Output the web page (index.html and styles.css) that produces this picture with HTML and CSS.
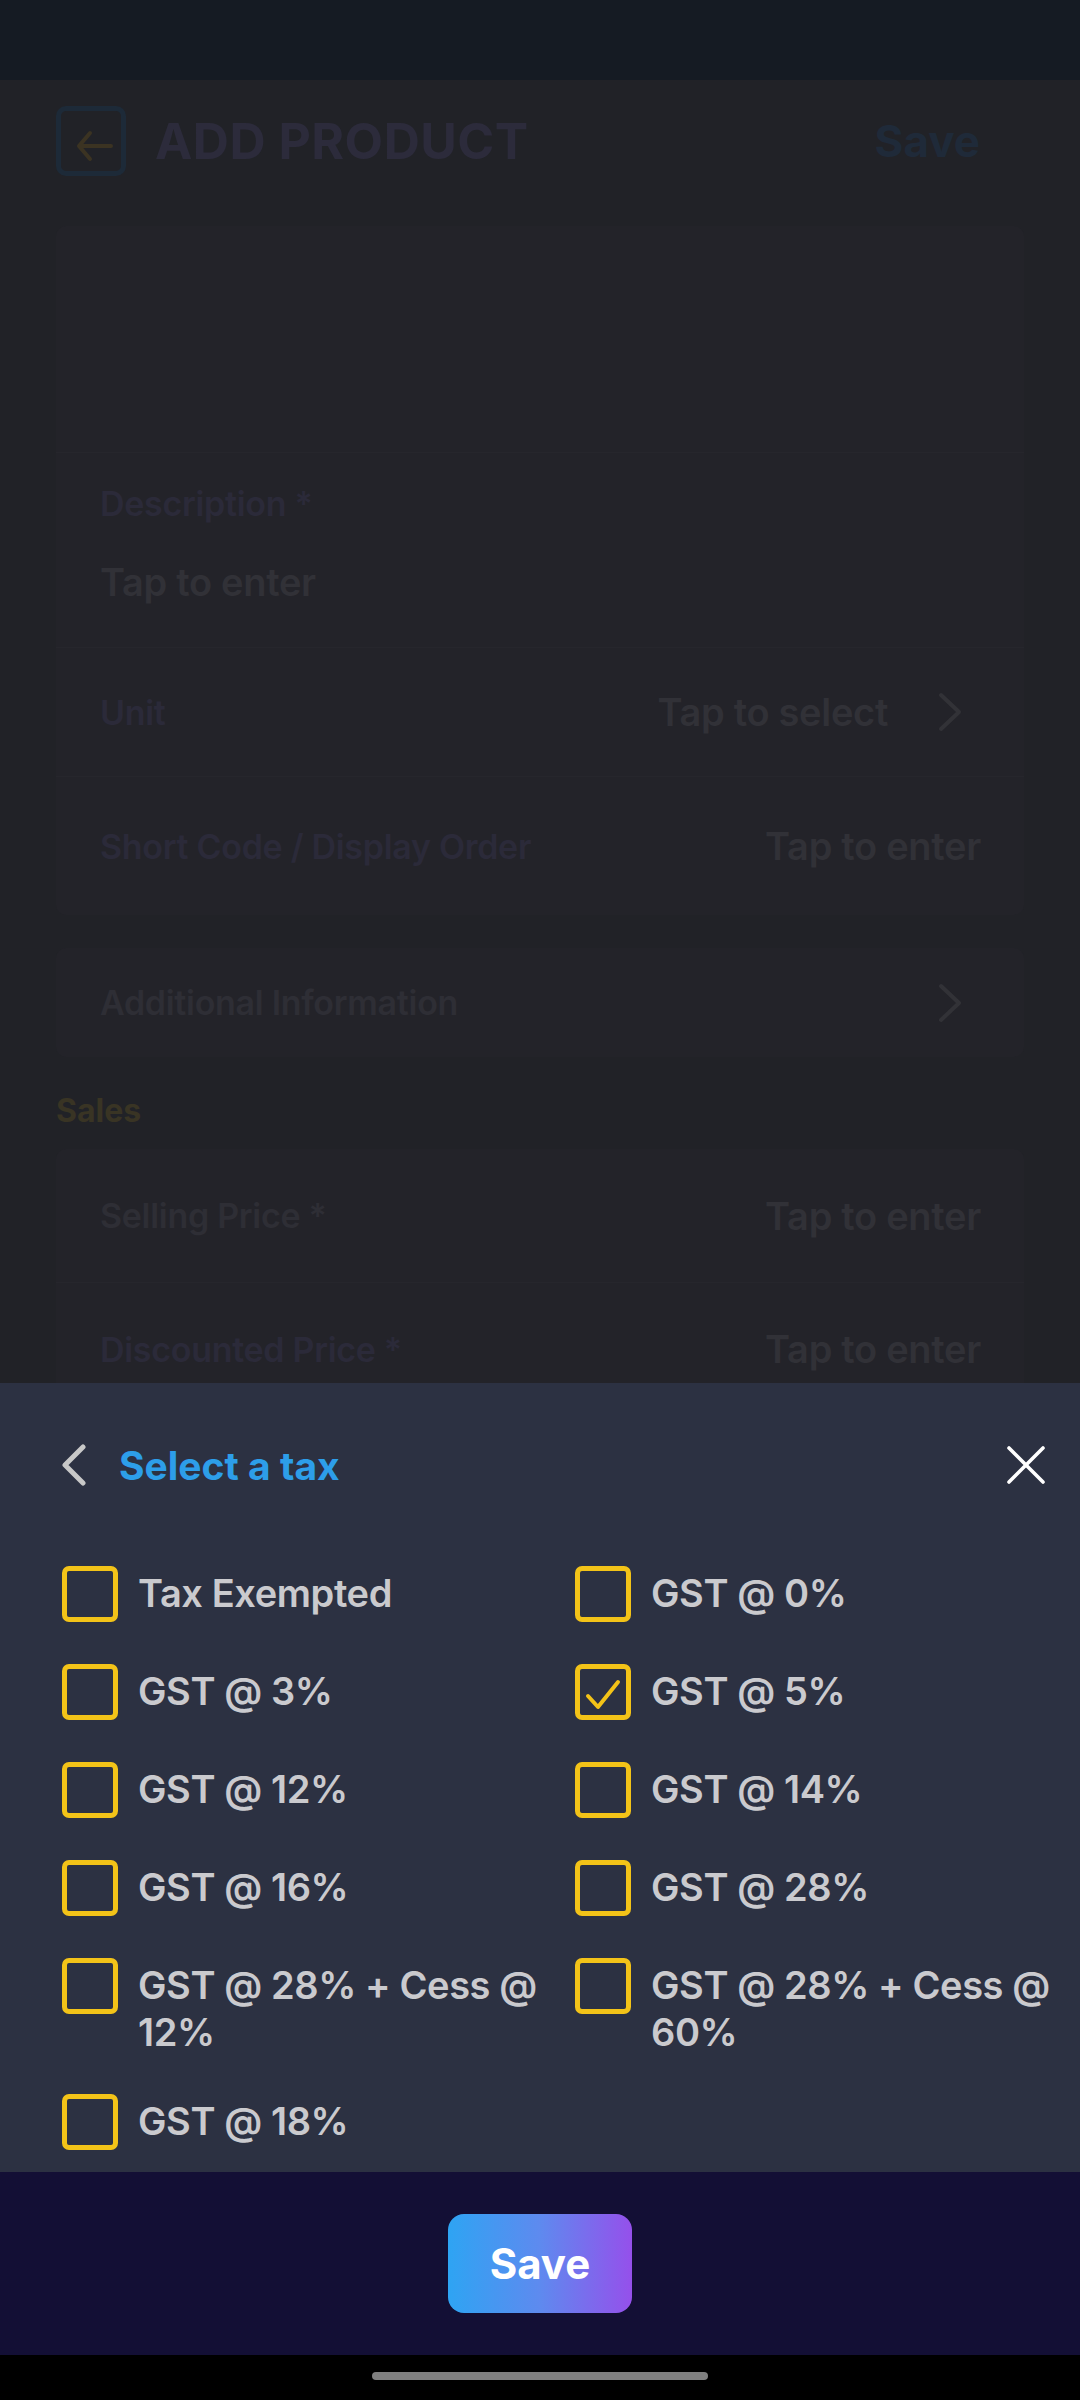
FILE: index.html
```html
<!DOCTYPE html>
<html lang="en">
<head>
<meta charset="utf-8">
<title>Add Product - Select a tax</title>
<link rel="stylesheet" href="styles.css">
</head>
<body>
<div class="screen">
  <div class="status-bar"></div>

  <div class="page">
    <div class="topbar">
      <div class="back-btn">
        <svg width="60" height="60" viewBox="0 0 60 60"><path d="M50 35 H18 M29 22 L18 35 L29 48" fill="none" stroke="#3b3322" stroke-width="4" stroke-linecap="round" stroke-linejoin="round"/></svg>
      </div>
      <div class="title">ADD PRODUCT</div>
      <div class="top-save">Save</div>
    </div>

    <div class="card">
      <div class="image-area"></div>
      <div class="row row-desc">
        <div class="label">Description *</div>
        <div class="value">Tap to enter</div>
      </div>
      <div class="row row-line row-unit">
        <div class="label">Unit</div>
        <div class="right">
          <span class="value">Tap to select</span>
          <svg class="chev" width="24" height="40" viewBox="0 0 24 40"><path d="M3 3 L21 20 L3 37" fill="none" stroke="#323237" stroke-width="4" stroke-linecap="round" stroke-linejoin="round"/></svg>
        </div>
      </div>
      <div class="row row-line row-code">
        <div class="label">Short Code / Display Order</div>
        <div class="value">Tap to enter</div>
      </div>
    </div>

    <div class="card card-add">
      <div class="row row-add">
        <div class="label label-muted">Additional Information</div>
        <svg class="chev" width="24" height="40" viewBox="0 0 24 40"><path d="M3 3 L21 20 L3 37" fill="none" stroke="#323237" stroke-width="4" stroke-linecap="round" stroke-linejoin="round"/></svg>
      </div>
    </div>

    <div class="section-title">Sales</div>

    <div class="card">
      <div class="row row-price">
        <div class="label label-muted">Selling Price *</div>
        <div class="value">Tap to enter</div>
      </div>
      <div class="row row-line row-price">
        <div class="label">Discounted Price *</div>
        <div class="value">Tap to enter</div>
      </div>
    </div>
  </div>

  <div class="sheet">
    <div class="sheet-head">
      <div class="sheet-left">
        <svg width="24" height="42" viewBox="0 0 24 42"><path d="M21 3 L3 21 L21 39" fill="none" stroke="#c8c8c8" stroke-width="5" stroke-linecap="round" stroke-linejoin="round"/></svg>
        <span class="sheet-title">Select a tax</span>
      </div>
      <svg class="close" width="38" height="38" viewBox="0 0 38 38"><path d="M2 2 L36 36 M36 2 L2 36" fill="none" stroke="#ffffff" stroke-width="3.6" stroke-linecap="round"/></svg>
    </div>

    <div class="tax-grid">
      <div class="tax"><span class="box"></span><span class="tax-name">Tax Exempted</span></div>
      <div class="tax"><span class="box"></span><span class="tax-name">GST @ 0%</span></div>
      <div class="tax"><span class="box"></span><span class="tax-name">GST @ 3%</span></div>
      <div class="tax"><span class="box checked"><svg width="46" height="46" viewBox="0 0 46 46"><path d="M8 27 L18 38 L38 13" fill="none" stroke="#f3c318" stroke-width="4" stroke-linecap="round" stroke-linejoin="round"/></svg></span><span class="tax-name">GST @ 5%</span></div>
      <div class="tax"><span class="box"></span><span class="tax-name">GST @ 12%</span></div>
      <div class="tax"><span class="box"></span><span class="tax-name">GST @ 14%</span></div>
      <div class="tax"><span class="box"></span><span class="tax-name">GST @ 16%</span></div>
      <div class="tax"><span class="box"></span><span class="tax-name">GST @ 28%</span></div>
      <div class="tax"><span class="box"></span><span class="tax-name">GST @ 28% + Cess @ 12%</span></div>
      <div class="tax"><span class="box"></span><span class="tax-name">GST @ 28% + Cess @ 60%</span></div>
      <div class="tax"><span class="box"></span><span class="tax-name">GST @ 18%</span></div>
    </div>
  </div>

  <div class="footer">
    <button class="save-btn">Save</button>
  </div>

  <div class="nav-bar"><div class="pill"></div></div>
</div>
</body>
</html>
```
FILE: styles.css
```css
* { box-sizing: border-box; }

html, body {
  margin: 0;
  padding: 0;
  background: #000;
}

body {
  font-family: Inter, "Noto Sans", "Liberation Sans", sans-serif;
}

.screen {
  width: 1080px;
  height: 2400px;
  display: flex;
  flex-direction: column;
  overflow: hidden;
}

.status-bar {
  height: 80px;
  flex: none;
  background: #151b23;
}

/* dimmed page underneath the sheet */
.page {
  height: 1303px;
  flex: none;
  overflow: hidden;
  background: #212227;
  padding: 26px 56px 0;
}

.topbar {
  display: flex;
  align-items: center;
  height: 70px;
}

.back-btn {
  width: 70px;
  height: 70px;
  border: 5px solid #1d2a38;
  border-radius: 10px;
  display: flex;
  align-items: center;
  justify-content: center;
}

.title {
  margin-left: 29px;
  font-size: 50px;
  font-weight: 700;
  color: #2c2b3b;
  letter-spacing: 0.5px;
  flex: 1;
}

.top-save {
  font-size: 44px;
  font-weight: 700;
  color: #1f2a39;
  margin-right: 44px;
}

.card {
  background: #232329;
  border-radius: 10px;
  overflow: hidden;
}

.topbar + .card { margin-top: 50px; }

.image-area { height: 226px; }

.row {
  display: flex;
  align-items: center;
  justify-content: space-between;
  padding: 0 43px 0 44px;
}

.row-line { border-top: 1px solid #26262c; }

.row-desc {
  flex-direction: column;
  align-items: flex-start;
  justify-content: flex-start;
  height: 195px;
  padding-top: 30px;
  border-top: 1px solid #26262c;
}

.row-desc .value { margin-top: 35px; }

.row-unit { height: 129px; padding-right: 62px; }
.row-code { height: 139px; }

.label {
  font-size: 34px;
  font-weight: 600;
  color: #2b2a39;
  line-height: 41px;
  letter-spacing: -0.3px;
}

.label-muted { color: #2e2e35; }

.value {
  font-size: 38px;
  font-weight: 600;
  color: #313137;
  line-height: 46px;
  letter-spacing: -0.3px;
}

.right {
  display: flex;
  align-items: center;
  gap: 50px;
}

.chev { display: block; }

.card-add { margin-top: 33px; }
.row-add { height: 109px; padding-right: 62px; }

.section-title {
  margin-top: 34px;
  margin-bottom: 19px;
  font-size: 32px;
  font-weight: 700;
  color: #393424;
  line-height: 39px;
}

.row-price { height: 133px; }

/* bottom sheet */
.sheet {
  height: 789px;
  flex: none;
  background: #2c3142;
  padding: 42px 35px 0 62px;
}

.sheet-head {
  height: 80px;
  display: flex;
  align-items: center;
  justify-content: space-between;
}

.sheet-left {
  display: flex;
  align-items: center;
  gap: 33px;
}

.sheet-left svg { display: block; }

.sheet-title {
  font-size: 39px;
  font-weight: 700;
  color: #2d9ee9;
}

.close { display: block; }

.tax-grid {
  margin-top: 61px;
  margin-right: -17px;
  display: grid;
  grid-template-columns: 513px 1fr;
  row-gap: 38px;
}

.tax {
  display: flex;
  align-items: flex-start;
  min-height: 60px;
}

.box {
  flex: none;
  width: 56px;
  height: 56px;
  border: 5px solid #f3c318;
  border-radius: 7px;
  display: flex;
  align-items: center;
  justify-content: center;
}

.tax-name {
  margin-left: 20px;
  margin-top: 4px;
  font-size: 38px;
  font-weight: 600;
  line-height: 47px;
  color: #cacace;
  letter-spacing: -0.4px;
}

.footer {
  height: 183px;
  flex: none;
  background: #130f35;
  display: flex;
  align-items: center;
  justify-content: center;
}

.save-btn {
  width: 184px;
  height: 99px;
  border: none;
  border-radius: 16px;
  background: linear-gradient(90deg, #2ea4f3 0%, #5e8aef 50%, #9550eb 100%);
  color: #ffffff;
  font-family: Inter, "Noto Sans", sans-serif;
  font-size: 42px;
  font-weight: 700;
  padding: 0;
}

.nav-bar {
  height: 45px;
  flex: none;
  background: #000;
  display: flex;
  justify-content: center;
  padding-top: 17px;
}

.pill {
  width: 336px;
  height: 8px;
  border-radius: 4px;
  background: #808080;
}
```
